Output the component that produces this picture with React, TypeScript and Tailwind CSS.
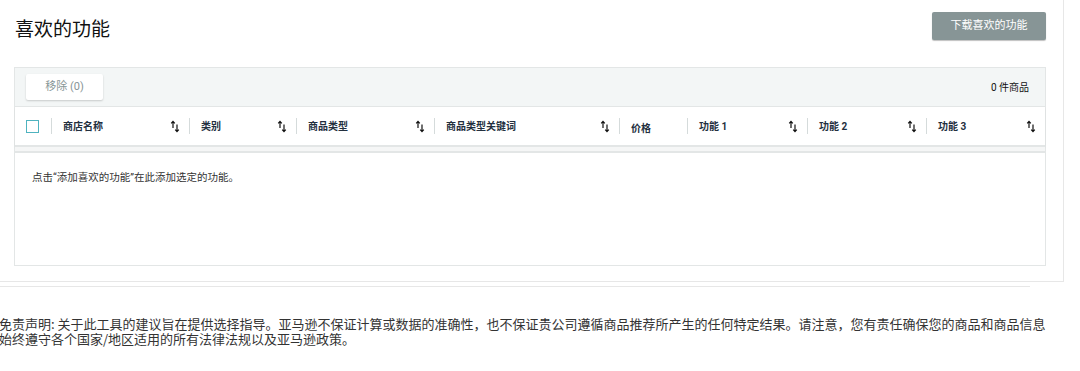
import React from 'react';

const cols = [
    { label: '商店名称', w: 'w-[138px]', sort: true },
    { label: '类别', w: 'w-[107px]', sort: true },
    { label: '商品类型', w: 'w-[138px]', sort: true },
    { label: '商品类型关键词', w: 'w-[185px]', sort: true },
    { label: '价格', w: 'w-[68px]', sort: false },
    { label: '功能 1', w: 'w-[120px]', sort: true },
    { label: '功能 2', w: 'w-[119px]', sort: true },
    { label: '功能 3', w: 'flex-1', sort: true },
];

function SortIcon() {
    return (
        <svg width="10" height="13" viewBox="0 0 10 13" className="text-[#111]">
            <path d="M3 8V1.5M1.2 3.3L3 1.3L4.8 3.3" stroke="currentColor" strokeWidth="1.2" fill="none" />
            <path d="M7 4.5V11.5M5.2 9.7L7 11.7L8.8 9.7" stroke="currentColor" strokeWidth="1.2" fill="none" />
        </svg>
    );
}

export default function App() {
    return (
        <div className="w-[1080px] h-[371px] bg-white overflow-hidden font-['Roboto','Noto_Sans_CJK_SC',sans-serif] text-[#0f1111]">
            <div className="w-[1064px] border-r border-b border-[#e7e7e7] pb-[15px]">
                <div className="flex items-start justify-between pl-[15px] pr-[17px] pt-[12px] h-[67px]">
                    <h1 className="text-[19px] leading-[28px] mt-[4px] text-[#111]">喜欢的功能</h1>
                    <button className="w-[114px] h-[28px] bg-[#879596] text-white text-[11px] rounded-[2px] shadow-[0_1px_1px_rgba(0,0,0,0.25)]">
                        下载喜欢的功能
                    </button>
                </div>
                <div className="ml-[14px] mr-[17px] border border-[#e3e6e6] h-[199px] flex flex-col">
                    <div className="h-[39px] bg-[#f3f6f6] border-b border-[#e3e6e6] flex items-center justify-between pl-[11px] pr-[16px]">
                        <button className="w-[77px] h-[26px] bg-white text-[#879596] text-[11px] rounded-[2px] shadow-[0_1px_2px_rgba(0,0,0,0.18)]">
                            移除 (0)
                        </button>
                        <span className="text-[10px] text-[#111]">0 件商品</span>
                    </div>
                    <div className="h-[40px] flex items-center border-b-2 border-[#e3e6e6] shadow-[0_1px_2px_rgba(0,0,0,0.05)] text-[10px] font-bold text-[#232f3e]">
                        <div className="w-[36px] flex items-center pl-[11px]">
                            <div className="w-[13px] h-[13px] border-[1.5px] border-[#4fb3bf]" />
                        </div>
                        {cols.map((c, i) => (
                            <div key={i} className={`${c.w} flex items-center`}>
                                <div className="w-px h-[16px] bg-[#d5dbdb]" />
                                <div className="flex-1 flex items-center justify-between pl-[11px] pr-[9px]">
                                    <span className={c.label === '价格' ? 'mt-[4px]' : ''}>{c.label}</span>
                                    {c.sort && <SortIcon />}
                                </div>
                            </div>
                        ))}
                    </div>
                    <div className="h-[6px] bg-[#f5f6f6] border-b-2 border-[#e3e6e6]" />
                    <div className="pl-[17px] pt-[17px] text-[10.5px] text-[#333]">
                        点击“添加喜欢的功能”在此添加选定的功能。
                    </div>
                </div>
            </div>
            <div className="w-[1030px] h-px bg-[#e7e7e7] mt-[4px]" />
            <p className="mt-[29px] -ml-[1px] text-[13px] leading-[15px] text-[#333] whitespace-nowrap font-['Noto_Sans_CJK_SC',sans-serif]">
                免责声明: 关于此工具的建议旨在提供选择指导。亚马逊不保证计算或数据的准确性，也不保证贵公司遵循商品推荐所产生的任何特定结果。请注意，您有责任确保您的商品和商品信息
                <br />
                始终遵守各个国家/地区适用的所有法律法规以及亚马逊政策。
            </p>
        </div>
    );
}
